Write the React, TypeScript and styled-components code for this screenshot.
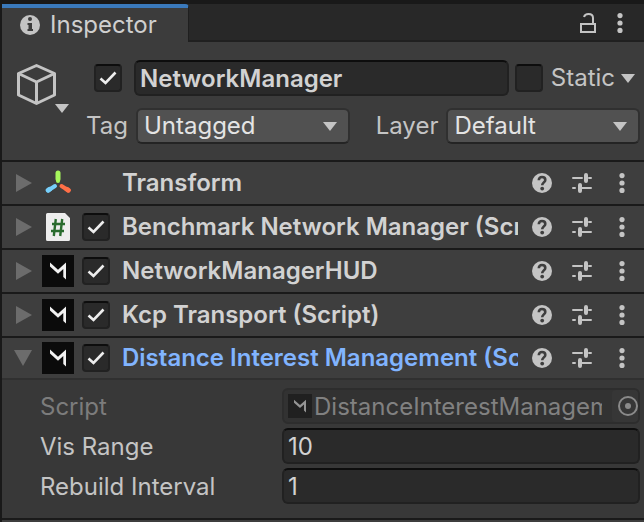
import React, { useState } from "react";
import styled, { createGlobalStyle } from "styled-components";

const GlobalStyle = createGlobalStyle`
  *, *::before, *::after { box-sizing: border-box; }
  body {
    margin: 0;
    background: #383838;
    color: #c4c4c4;
    font-family: Inter, "Liberation Sans", sans-serif;
    font-size: 24px;
    line-height: 32px;
  }
  button, input, select { font: inherit; color: inherit; margin: 0; }
  svg { display: block; flex: none; }
`;

const Panel = styled.main`
  min-height: 100vh;
  display: flex;
  flex-direction: column;
  border-top: 4px solid #191919;
  border-left: 2px solid #191919;
  background: #3e3e3e;
`;

const TabBar = styled.header`
  display: flex;
  justify-content: space-between;
  height: 38px;
  background: #282828;
  box-shadow: inset 0 -2px #202020;
`;

const Tab = styled.button`
  display: flex;
  align-items: center;
  gap: 10px;
  width: 187px;
  padding: 0 0 0 18px;
  border: 0;
  border-top: 4px solid #3a79bb;
  border-right: 1px solid #1f1f1f;
  border-radius: 0 4px 0 0;
  background: #3c3c3c;
  color: #cfcfcf;
  text-align: left;
`;

const TabActions = styled.div`
  display: flex;
  align-items: center;
  gap: 12px;
  padding-right: 14px;
`;

const IconButton = styled.button`
  display: flex;
  align-items: center;
  justify-content: center;
  flex: none;
  width: 20px;
  height: 28px;
  padding: 0;
  border: 0;
  background: transparent;
  color: #c4c4c4;
`;

const ObjectHeader = styled.section`
  display: flex;
  gap: 14px;
  padding: 18px 4px 16px 14px;
  background: #3c3c3c;
  border-bottom: 2px solid #1a1a1a;
`;

const CubeButton = styled.button`
  align-self: flex-start;
  width: 56px;
  height: 56px;
  padding: 0;
  border: 0;
  background: transparent;
  color: #c4c4c4;
`;

const HeaderRows = styled.div`
  display: flex;
  flex: 1;
  min-width: 0;
  flex-direction: column;
  gap: 12px;
`;

const NameRow = styled.div`
  display: flex;
  align-items: center;
  gap: 6px;
  height: 36px;
  padding-left: 8px;
`;

const SelectRow = styled.div`
  display: flex;
  align-items: center;
  gap: 8px;
`;

const SelectLabel = styled.label<{ $spaced?: boolean }>`
  flex: none;
  margin-left: ${(p) => (p.$spaced ? 18 : 0)}px;
`;

const SelectBox = styled.div<{ $grow: number }>`
  display: grid;
  align-items: center;
  flex: ${(p) => p.$grow} 1 0;
  min-width: 0;
`;

const StyledSelect = styled.select`
  grid-area: 1 / 1;
  width: 100%;
  height: 36px;
  padding: 0 36px 0 6px;
  appearance: none;
  border: 2px solid #303030;
  border-bottom-color: #242424;
  border-radius: 6px;
  background: #515151;
  color: #e4e4e4;
`;

const SelectArrow = styled.span`
  grid-area: 1 / 1;
  justify-self: end;
  margin-right: 13px;
  pointer-events: none;
`;

const TextInput = styled.input<{ $bold?: boolean }>`
  flex: 1;
  min-width: 0;
  width: 100%;
  height: 36px;
  padding: 0 4px;
  border: 2px solid #212121;
  border-top-color: #0d0d0d;
  border-radius: 6px;
  background: #2a2a2a;
  color: #d2d2d2;
  font-weight: ${(p) => (p.$bold ? 600 : 400)};
  outline: 0;
`;

const CheckLabel = styled.label`
  display: grid;
  flex: none;
  place-items: center;
  width: 28px;
  height: 28px;
`;

const CheckInput = styled.input`
  grid-area: 1 / 1;
  width: 28px;
  height: 28px;
  appearance: none;
  border: 2px solid #212121;
  border-top-color: #0d0d0d;
  border-radius: 4px;
  background: #2a2a2a;
`;

const Tick = styled.svg`
  grid-area: 1 / 1;
  pointer-events: none;
`;

const NameCheck = styled.div`
  margin-right: 6px;
`;

const StaticButton = styled.button`
  display: flex;
  align-items: center;
  gap: 6px;
  padding: 0 5px 0 2px;
  border: 0;
  background: transparent;
`;

const ComponentRow = styled.div<{ $open?: boolean }>`
  display: flex;
  align-items: center;
  height: ${(p) => (p.$open ? 42 : 44)}px;
  padding: 0 12px 0 12px;
  background: #3e3e3e;
  border-bottom: 2px solid ${(p) => (p.$open ? "#303030" : "#1a1a1a")};
`;

const Foldout = styled.button`
  flex: none;
  width: 18px;
  height: 28px;
  padding: 0;
  border: 0;
  background: transparent;
  color: #6c6c6c;
`;

const ComponentIcon = styled.span`
  display: grid;
  flex: none;
  place-items: center;
  width: 32px;
  height: 32px;
  margin: 0 8px 0 10px;
`;

const CheckSlot = styled.span`
  flex: none;
  width: 28px;
  height: 28px;
`;

const ComponentTitle = styled.h2<{ $active?: boolean }>`
  flex: 1;
  min-width: 0;
  margin: 0 14px 0 12px;
  overflow: hidden;
  white-space: nowrap;
  font-size: 24px;
  line-height: 32px;
  font-weight: 600;
  color: ${(p) => (p.$active ? "#81b4ff" : "#d2d2d2")};
`;

const RowActions = styled.div`
  display: flex;
  gap: 20px;
`;

const Properties = styled.section`
  display: flex;
  flex-direction: column;
  gap: 4px;
  padding: 8px 4px 14px 38px;
  background: #383838;
  border-bottom: 2px solid #1a1a1a;
`;

const PropertyRow = styled.div`
  display: flex;
  align-items: center;
`;

const PropertyLabel = styled.label<{ $dim?: boolean }>`
  flex: none;
  width: 242px;
  padding-top: 2px;
  color: ${(p) => (p.$dim ? "#7c7c7c" : "#c4c4c4")};
`;

const ObjectField = styled.div`
  display: flex;
  align-items: center;
  flex: 1;
  min-width: 0;
  height: 36px;
  padding-left: 4px;
  border: 2px solid #2d2d2d;
  border-radius: 6px;
  background: #323232;
  color: #818181;
`;

const ObjectValue = styled.input`
  flex: 1;
  min-width: 0;
  height: 32px;
  padding: 2px 0 0 2px;
  border: 0;
  background: transparent;
`;

const PickerButton = styled.button`
  flex: none;
  width: 26px;
  height: 32px;
  margin-left: 10px;
  padding: 0 0 0 6px;
  border: 0;
  border-radius: 4px;
  background: #363636;
  color: #8a8a8a;
`;

const Caret = () => (
  <svg width="14" height="9" viewBox="0 0 14 9" fill="#c4c4c4">
    <path d="M0 0h14L7 9z" />
  </svg>
);

const InfoIcon = () => (
  <svg width="20" height="20" viewBox="0 0 20 20">
    <circle cx="10" cy="10" r="10" fill="#c4c4c4" />
    <circle cx="10" cy="4" r="2" fill="#3c3c3c" />
    <path d="M7.5 8H12v6h1v2H7.500v-2H8.500v-4h-1z" fill="#3c3c3c" />
  </svg>
);

const LockIcon = () => (
  <svg width="16" height="20" viewBox="0 0 16 20" fill="none" stroke="#c4c4c4" strokeWidth="2">
    <rect x="1" y="11" width="14" height="8" />
    <path d="M13 11V5C13 2.500 11 1 8.500 1 6 1 4.500 2.300 4 4" />
  </svg>
);

const DotsIcon = () => (
  <svg width="6" height="20" viewBox="0 0 6 20" fill="#c4c4c4">
    <circle cx="3" cy="2.6" r="2.6" />
    <circle cx="3" cy="10" r="2.6" />
    <circle cx="3" cy="17.4" r="2.6" />
  </svg>
);

const HelpIcon = () => (
  <svg width="20" height="20" viewBox="0 0 20 20">
    <circle cx="10" cy="10" r="10" fill="#c4c4c4" />
    <path
      d="M6.800 7.200C6.800 5.200 8 4 10 4c2 0 3.300 1.200 3.300 2.900 0 2.400-3.100 2.600-3.100 5.400"
      fill="none"
      stroke="#3e3e3e"
      strokeWidth="2.600"
    />
    <circle cx="10.2" cy="15.600" r="1.900" fill="#3e3e3e" />
  </svg>
);

const SlidersIcon = () => (
  <svg width="20" height="20" viewBox="0 0 20 20" fill="none" stroke="#c4c4c4" strokeLinecap="round">
    <path d="M1 5h9M17 5h2M1 15h2M10 15h9" strokeWidth="2" />
    <path d="M14 2v6M8 12v6" strokeWidth="4" />
  </svg>
);

const CubeIcon = () => (
  <svg width="56" height="56" viewBox="0 0 56 56">
    <g fill="none" stroke="#c4c4c4" strokeWidth="3" strokeLinejoin="round">
      <path d="M20.500 5.500L38.500 13.500V35L20.500 43.500 2.500 35V13.500z" />
      <path d="M2.500 13.500L20.500 22 38.500 13.500M20.500 22v21" />
    </g>
    <path d="M39 44h14l-7 9z" fill="#c4c4c4" />
  </svg>
);

const TransformIcon = () => (
  <svg width="32" height="32" viewBox="0 0 32 32" fill="none" strokeLinecap="round">
    <path d="M16 6v6" stroke="#a6f75c" strokeWidth="5" />
    <path d="M16 12v2" stroke="#a6f75c" strokeWidth="4" />
    <path d="M13 19L6 23.500" stroke="#76cffb" strokeWidth="4" />
    <path d="M7.500 22.300L6.200 23.200" stroke="#76cffb" strokeWidth="5" />
    <path d="M19.500 19L26.500 23.500" stroke="#ff6f47" strokeWidth="4" />
    <path d="M25 22.300l1.300.9" stroke="#ff6f47" strokeWidth="5" />
  </svg>
);

const ScriptIcon = () => (
  <svg width="24" height="28" viewBox="0 0 24 28">
    <path d="M1.500 0H19l5 5v21.500a1.500 1.500 0 0 1-1.500 1.500h-21A1.500 1.500 0 0 1 0 26.500v-25A1.500 1.500 0 0 1 1.500 0z" fill="#ededed" />
    <path
      d="M9.800 6L7.800 23M16.200 6L14.200 23M6 11h13M5 18h13"
      fill="none"
      stroke="#296b2e"
      strokeWidth="2.400"
    />
  </svg>
);

const MirrorIcon = ({ size = 32, dim = false }: { size?: number; dim?: boolean }) => (
  <svg width={size} height={size} viewBox="0 0 32 32">
    <path d="M0 0h32v32H0z" fill={dim ? "#202020" : "#0b0b0b"} />
    <path
      d="M8 7.500L16 14.800 24 7.500V24.500L21.300 22V14L16 18.800 8 11.500z"
      fill={dim ? "#949494" : "#f2f2f2"}
    />
  </svg>
);

const FoldIcon = ({ open }: { open?: boolean }) => (
  <svg width="18" height="28" viewBox="0 0 18 28" fill="currentColor">
    <path d={open ? "M0 6h18L9 22z" : "M2 5v18l16-9z"} />
  </svg>
);

const PickerIcon = () => (
  <svg width="20" height="20" viewBox="0 0 20 20">
    <circle cx="10" cy="10" r="9" fill="none" stroke="currentColor" strokeWidth="2" />
    <circle cx="10" cy="10" r="3" fill="currentColor" />
  </svg>
);

function Checkbox({ label, initial = false }: { label: string; initial?: boolean }) {
  const [on, setOn] = useState(initial);
  return (
    <CheckLabel>
      <CheckInput type="checkbox" aria-label={label} checked={on} onChange={() => setOn(!on)} />
      {on && (
        <Tick width="18" height="14" viewBox="0 0 18 14" fill="none" stroke="#eeeeee" strokeWidth="2.600">
          <path d="M1.500 7.500L6.500 12 16.500 1.500" />
        </Tick>
      )}
    </CheckLabel>
  );
}

function Dropdown({ id, value, grow }: { id: string; value: string; grow: number }) {
  return (
    <SelectBox $grow={grow}>
      <StyledSelect id={id} defaultValue={value}>
        <option>{value}</option>
      </StyledSelect>
      <SelectArrow>
        <Caret />
      </SelectArrow>
    </SelectBox>
  );
}

type Entry = { title: string; icon: React.ReactNode; toggle: boolean; open?: boolean };

const entries: Entry[] = [
  { title: "Transform", icon: <TransformIcon />, toggle: false },
  { title: "Benchmark Network Manager (Script)", icon: <ScriptIcon />, toggle: true },
  { title: "NetworkManagerHUD", icon: <MirrorIcon />, toggle: true },
  { title: "Kcp Transport (Script)", icon: <MirrorIcon />, toggle: true },
  { title: "Distance Interest Management (Script)", icon: <MirrorIcon />, toggle: true, open: true },
];

export default function App() {
  return (
    <>
      <GlobalStyle />
      <Panel>
        <TabBar>
          <Tab>
            <InfoIcon />
            Inspector
          </Tab>
          <TabActions>
            <IconButton aria-label="Lock">
              <LockIcon />
            </IconButton>
            <IconButton aria-label="Menu">
              <DotsIcon />
            </IconButton>
          </TabActions>
        </TabBar>

        <ObjectHeader>
          <CubeButton aria-label="Object icon">
            <CubeIcon />
          </CubeButton>
          <HeaderRows>
            <NameRow>
              <NameCheck>
                <Checkbox label="Active" initial />
              </NameCheck>
              <TextInput $bold aria-label="Name" defaultValue="NetworkManager" />
              <Checkbox label="Static" />
              <StaticButton>
                Static
                <Caret />
              </StaticButton>
            </NameRow>
            <SelectRow>
              <SelectLabel htmlFor="tag">Tag</SelectLabel>
              <Dropdown id="tag" value="Untagged" grow={212} />
              <SelectLabel htmlFor="layer" $spaced>
                Layer
              </SelectLabel>
              <Dropdown id="layer" value="Default" grow={192} />
            </SelectRow>
          </HeaderRows>
        </ObjectHeader>

        {entries.map((e) => (
          <ComponentRow key={e.title} $open={e.open}>
            <Foldout aria-label={`Toggle ${e.title}`} aria-expanded={!!e.open}>
              <FoldIcon open={e.open} />
            </Foldout>
            <ComponentIcon>{e.icon}</ComponentIcon>
            <CheckSlot>{e.toggle && <Checkbox label={e.title} initial />}</CheckSlot>
            <ComponentTitle $active={e.open}>{e.title}</ComponentTitle>
            <RowActions>
              <IconButton aria-label="Help">
                <HelpIcon />
              </IconButton>
              <IconButton aria-label="Presets">
                <SlidersIcon />
              </IconButton>
              <IconButton aria-label="More">
                <DotsIcon />
              </IconButton>
            </RowActions>
          </ComponentRow>
        ))}

        <Properties>
          <PropertyRow>
            <PropertyLabel htmlFor="script" $dim>
              Script
            </PropertyLabel>
            <ObjectField>
              <MirrorIcon size={24} dim />
              <ObjectValue id="script" readOnly value="DistanceInterestManagement" />
              <PickerButton aria-label="Pick object">
                <PickerIcon />
              </PickerButton>
            </ObjectField>
          </PropertyRow>
          <PropertyRow>
            <PropertyLabel htmlFor="range">Vis Range</PropertyLabel>
            <TextInput id="range" defaultValue="10" />
          </PropertyRow>
          <PropertyRow>
            <PropertyLabel htmlFor="interval">Rebuild Interval</PropertyLabel>
            <TextInput id="interval" defaultValue="1" />
          </PropertyRow>
        </Properties>
      </Panel>
    </>
  );
}
